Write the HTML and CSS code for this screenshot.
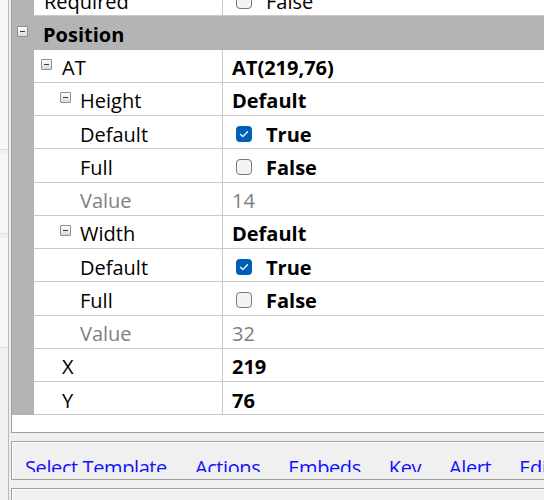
FILE: index.html
```html
<!DOCTYPE html>
<html>
<head>
<meta charset="utf-8">
<link rel="stylesheet" href="styles.css">
</head>
<body>
<div class="app">
  <div class="side">
    <div class="side-box sb1"></div>
    <div class="side-box sb2"></div>
    <div class="side-box sb3"></div>
  </div>
  <div class="main">
    <div class="grid">
      <div class="rows">
        <div class="row">
          <div class="gutter"></div>
          <div class="name ind0">Required</div>
          <div class="value"><span class="cb"></span><span class="val-text">False</span></div>
        </div>
        <div class="row cat">
          <div class="gutter"><span class="glyph"></span></div>
          <div class="cat-name">Position</div>
        </div>
        <div class="row">
          <div class="gutter"></div>
          <div class="name g0"><span class="glyph"></span>AT</div>
          <div class="value bold">AT(219,76)</div>
        </div>
        <div class="row">
          <div class="gutter"></div>
          <div class="name g1"><span class="glyph"></span>Height</div>
          <div class="value bold">Default</div>
        </div>
        <div class="row">
          <div class="gutter"></div>
          <div class="name ind2">Default</div>
          <div class="value"><span class="cb checked"><svg viewBox="0 0 15 15" width="15" height="15"><path d="M4.2 7.8 L6.4 10 L10.8 5.4" fill="none" stroke="#fff" stroke-width="1.2" stroke-linecap="round" stroke-linejoin="round"/></svg></span><span class="val-text bold">True</span></div>
        </div>
        <div class="row">
          <div class="gutter"></div>
          <div class="name ind2">Full</div>
          <div class="value"><span class="cb"></span><span class="val-text bold">False</span></div>
        </div>
        <div class="row">
          <div class="gutter"></div>
          <div class="name ind2 dim">Value</div>
          <div class="value dim">14</div>
        </div>
        <div class="row">
          <div class="gutter"></div>
          <div class="name g1"><span class="glyph"></span>Width</div>
          <div class="value bold">Default</div>
        </div>
        <div class="row">
          <div class="gutter"></div>
          <div class="name ind2">Default</div>
          <div class="value"><span class="cb checked"><svg viewBox="0 0 15 15" width="15" height="15"><path d="M4.2 7.8 L6.4 10 L10.8 5.4" fill="none" stroke="#fff" stroke-width="1.2" stroke-linecap="round" stroke-linejoin="round"/></svg></span><span class="val-text bold">True</span></div>
        </div>
        <div class="row">
          <div class="gutter"></div>
          <div class="name ind2">Full</div>
          <div class="value"><span class="cb"></span><span class="val-text bold">False</span></div>
        </div>
        <div class="row">
          <div class="gutter"></div>
          <div class="name ind2 dim">Value</div>
          <div class="value dim">32</div>
        </div>
        <div class="row">
          <div class="gutter"></div>
          <div class="name ind1">X</div>
          <div class="value bold">219</div>
        </div>
        <div class="row">
          <div class="gutter"></div>
          <div class="name ind1">Y</div>
          <div class="value bold">76</div>
        </div>
      </div>
    </div>
    <div class="panel">
      <div class="links">
        <a class="link">Select Template</a>
        <a class="link">Actions</a>
        <a class="link">Embeds</a>
        <a class="link">Key</a>
        <a class="link">Alert</a>
        <a class="link">Edit</a>
      </div>
    </div>
    <div class="panel panel2"></div>
  </div>
</div>
</body>
</html>
```
FILE: styles.css
```css
* { box-sizing: border-box; }
html, body {
  margin: 0;
  padding: 0;
  width: 544px;
  height: 500px;
  overflow: hidden;
  background: #f0f0f0;
}
body {
  font-family: "Open Sans", "Noto Sans", sans-serif;
  font-size: 20px;
  color: #000;
}
.app {
  display: flex;
  width: 544px;
  height: 500px;
  overflow: hidden;
}
.side {
  width: 9px;
  flex: none;
  border-right: 1px solid #b9b9b9;
  background: #f0f0f0;
  display: flex;
  flex-direction: column;
}
.side-box { flex: none; background: #f7f7f7; border-bottom: 1px solid #dcdcdc; }
.sb1 { height: 150px; }
.sb2 { height: 80px; margin-top: 4px; }
.sb3 { height: 110px; margin-top: 4px; }
.main {
  flex: none;
  width: 700px;
  margin-left: 2px;
  display: flex;
  flex-direction: column;
}
.grid {
  flex: none;
  margin-top: -17px;
  height: 450px;
  border: 1px solid #a0a0a0;
  border-top: none;
  background: #fff;
  overflow: hidden;
}
.row {
  display: flex;
  height: 33.25px;
  line-height: 32px;
}
.gutter {
  width: 22px;
  flex: none;
  background: #b4b4b4;
  display: flex;
  align-items: center;
}
.name {
  width: 189px;
  flex: none;
  border-right: 1px solid #c9c9c9;
  border-bottom: 1px solid #c9c9c9;
  white-space: nowrap;
  padding-top: 5px;
  display: flex;
  align-items: center;
}
.value {
  flex: 1;
  border-bottom: 1px solid #c9c9c9;
  padding-left: 9px;
  padding-top: 5px;
  white-space: nowrap;
  display: flex;
  align-items: center;
}
.bold { font-weight: 700; }
.dim { color: #808080; }
.ind0 { padding-left: 10px; }
.ind1 { padding-left: 28px; }
.ind2 { padding-left: 46px; }
.g0 { padding-left: 7px; }
.g0 .glyph { margin-right: 10px; }
.g1 { padding-left: 26px; }
.g1 .glyph { margin-right: 9px; }
.glyph {
  width: 11px;
  height: 11px;
  flex: none;
  border: 1px solid #8e8f8f;
  border-radius: 1px;
  background: linear-gradient(#ffffff, #d9d9d9);
  position: relative;
  margin-top: -7px;
}
.glyph::after {
  content: "";
  position: absolute;
  left: 2px;
  top: 4px;
  width: 5px;
  height: 1px;
  background: #1e3f7a;
}
.cat { background: #b4b4b4; }
.cat .gutter .glyph { margin-left: 5px; margin-top: -2px; }
.cat-name {
  font-weight: 700;
  padding-left: 9px;
  padding-top: 5px;
  display: flex;
  align-items: center;
}
.cb {
  width: 16px;
  height: 16px;
  flex: none;
  border: 1px solid #7a7a7a;
  border-radius: 4px;
  background: #f3f3f3;
  margin-left: 4px;
  margin-right: 14px;
  margin-top: -1px;
  display: block;
}
.cb.checked {
  border: none;
  background: #005fb8;
}
.cb svg { display: block; width: 16px; height: 16px; }
.panel {
  flex: none;
  margin-top: 8px;
  height: 39px;
  border: 1px solid #a0a0a0;
  border-right: none;
  background: #f0f0f0;
  box-shadow: inset 1px 1px 0 #ffffff;
}
.links {
  height: 30px;
  overflow: hidden;
  display: flex;
  gap: 28px;
  padding-left: 13px;
  padding-top: 12px;
  line-height: 28px;
}
.link {
  color: #1010ff;
  white-space: nowrap;
  letter-spacing: -0.4px;
}
.panel2 {
  margin-top: 8px;
  height: 40px;
}
```
